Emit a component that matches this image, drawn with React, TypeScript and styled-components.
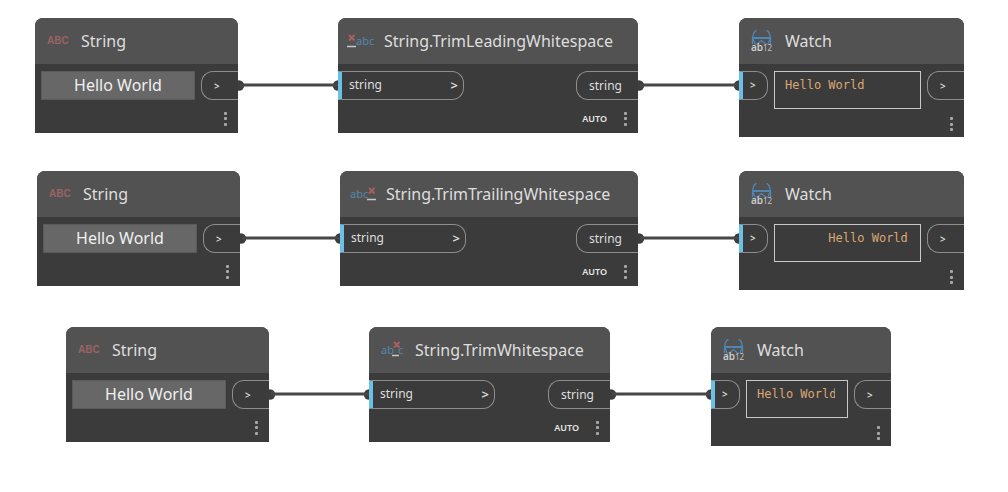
import React from "react";
import styled, { createGlobalStyle } from "styled-components";

const GlobalStyle = createGlobalStyle`
  * { box-sizing: border-box; }
  body {
    margin: 0;
    background: #ffffff;
    font-family: "Noto Sans", "Open Sans", sans-serif;
    color: #dedede;
  }
  button, input { font: inherit; color: inherit; }
`;

const Canvas = styled.main`
  display: flex;
  flex-direction: column;
  min-height: 100vh;
  padding-bottom: 32px;
  overflow-x: auto;
`;

const Graph = styled.section<{ $indent: number; $space: number }>`
  display: flex;
  align-items: flex-start;
  padding: ${(p) => p.$space}px 0 0 ${(p) => p.$indent}px;
`;

const NodeCard = styled.article<{ $width: number }>`
  position: relative;
  z-index: 1;
  flex: none;
  width: ${(p) => p.$width}px;
  border-radius: 8px 8px 0 0;
  background: #3b3b3b;
  overflow: hidden;
`;

const NodeHeader = styled.header`
  display: flex;
  align-items: center;
  gap: 9px;
  height: 46px;
  padding-left: 9px;
  background: #525252;
`;

const NodeTitle = styled.h2`
  margin: 0;
  font-size: 16px;
  line-height: 24px;
  font-weight: 400;
  white-space: nowrap;
`;

const NodeBody = styled.div<{ $flushLeft?: boolean }>`
  display: flex;
  align-items: flex-start;
  gap: 6px;
  padding: 7px 0 0 ${(p) => (p.$flushLeft ? 0 : 6)}px;
`;

const NodeFooter = styled.footer`
  display: flex;
  align-items: center;
  justify-content: flex-end;
  gap: 13px;
  height: 33px;
  padding: 4px 7px 0 0;
`;

const WatchFooter = styled(NodeFooter)`
  height: 28px;
  padding-top: 2px;
`;

const RunMode = styled.span`
  font-size: 9px;
  line-height: 14px;
  font-weight: 600;
  color: #e6e6e6;
`;

const MenuButton = styled.button`
  display: flex;
  flex-direction: column;
  align-items: center;
  justify-content: space-between;
  width: 11px;
  height: 14px;
  padding: 0;
  border: 0;
  background: none;
`;

const MenuDot = styled.i`
  width: 3px;
  height: 3px;
  border-radius: 1px;
  background: #a8a8a8;
`;

const Port = styled.button<{ $width: number }>`
  display: flex;
  flex: none;
  align-items: center;
  width: ${(p) => p.$width}px;
  height: 29px;
  border: 1px solid #8e8e8e;
  background: none;
  font-size: 12px;
  line-height: 16px;
`;

const InPort = styled(Port)`
  justify-content: space-between;
  padding: 0 5px 2px 7px;
  border-left: 4px solid #6ac0e7;
  border-radius: 0 12px 12px 0;
`;

const OutPort = styled(Port)`
  padding: 0 0 0 12px;
  margin-left: auto;
  border-right: 0;
  border-radius: 12px 0 0 12px;
`;

const Chevron = styled.span<{ $small?: boolean }>`
  font-size: ${(p) => (p.$small ? 10 : 13)}px;
  font-weight: 600;
`;

const StringField = styled.input`
  flex: 1;
  min-width: 0;
  height: 29px;
  padding: 0 0 2px;
  border: 1px solid #5a5a5a;
  background: #676767;
  font-size: 16px;
  text-align: center;
  color: #f0f0f0;
`;

const WatchValue = styled.output`
  flex: 1;
  min-width: 0;
  height: 38px;
  padding: 5px 12px 0 10px;
  border: 1px solid #c8c8c8;
`;

const WatchText = styled.span`
  display: block;
  overflow: hidden;
  font-family: "DejaVu Sans Mono", monospace;
  font-size: 12px;
  line-height: 16px;
  white-space: pre;
  color: #dba673;
`;

const WireLine = styled.svg`
  display: block;
  flex: none;
  height: 12px;
  margin-top: 61px;
  overflow: visible;
`;

const IconBox = styled.svg`
  flex: none;
  width: 28px;
  height: 28px;
`;

function Wire({ length }: { length: number }) {
  return (
    <WireLine width={length} viewBox={`0 0 ${length} 12`} aria-hidden="true">
      <circle cx={1} cy={6.5} r={5.2} fill="#3d3d3d" />
      <circle cx={length} cy={6.5} r={5.2} fill="#3d3d3d" />
      <path d={`M2 6H${length}`} stroke="#474747" strokeWidth={3} />
    </WireLine>
  );
}

const iconFont = "Noto Sans, sans-serif";

function StringIcon() {
  return (
    <IconBox viewBox="0 0 28 28" aria-hidden="true">
      <text x="3" y="17" fontFamily="Liberation Sans, sans-serif" fontSize="10" fontWeight="700" fill="#9a6462">ABC</text>
    </IconBox>
  );
}

function Cross({ x, y }: { x: number; y: number }) {
  return <path d={`M${x} ${y}l5.500 5.500m0-5.500l-5.500 5.500`} stroke="#a8605d" strokeWidth="2" />;
}

type TrimKind = "leading" | "trailing" | "both";

function TrimIcon({ kind }: { kind: TrimKind }) {
  const text = { fontFamily: iconFont, fontSize: 11, fill: "#5686ab" };
  return (
    <IconBox viewBox="0 0 28 28" aria-hidden="true">
      {kind === "leading" && (
        <>
          <Cross x={2} y={8} />
          <path d="M0 19.500h9" stroke="#c8c8c8" strokeWidth="1.500" />
          <text x="9" y="18" {...text}>abc</text>
        </>
      )}
      {kind === "trailing" && (
        <>
          <text x="1" y="18" {...text}>abc</text>
          <Cross x={20} y={8} />
          <path d="M18 19.500h9" stroke="#c8c8c8" strokeWidth="1.500" />
        </>
      )}
      {kind === "both" && (
        <>
          <text x="3" y="18" {...text}>ab</text>
          <text x="20" y="18" {...text}>c</text>
          <Cross x={16} y={6} />
          <path d="M14 19.500h7" stroke="#c8c8c8" strokeWidth="1.500" />
        </>
      )}
    </IconBox>
  );
}

function WatchIcon() {
  return (
    <IconBox viewBox="0 0 28 28" aria-hidden="true">
      <g fill="none" stroke="#4f86b5">
        <path d="M8.500 3.500Q5.500 4 4.500 11V17M18.500 3.500Q21.500 4 22.500 11V17" strokeWidth="1.300" />
        <path d="M4 11H23" strokeWidth="1.800" />
        <path d="M5 12L7 17H9.500L13.500 13.500L17.500 17H20L22 12" strokeWidth="1.200" />
      </g>
      <text x="3" y="24" fontFamily={iconFont} fontSize="10" fontWeight="600" fill="#cccccc">ab</text>
      <text x="15" y="24" fontFamily={iconFont} fontSize="8" fill="#c4c4c4">12</text>
    </IconBox>
  );
}

function Menu() {
  return (
    <MenuButton type="button" aria-label="Node options">
      <MenuDot />
      <MenuDot />
      <MenuDot />
    </MenuButton>
  );
}

function StringNode({ width }: { width: number }) {
  return (
    <NodeCard $width={width}>
      <NodeHeader>
        <StringIcon />
        <NodeTitle>String</NodeTitle>
      </NodeHeader>
      <NodeBody>
        <StringField aria-label="String value" defaultValue="Hello World" />
        <OutPort type="button" $width={37}>
          <Chevron $small>&gt;</Chevron>
        </OutPort>
      </NodeBody>
      <NodeFooter>
        <Menu />
      </NodeFooter>
    </NodeCard>
  );
}

function TrimNode({ width, title, kind }: { width: number; title: string; kind: TrimKind }) {
  return (
    <NodeCard $width={width}>
      <NodeHeader>
        <TrimIcon kind={kind} />
        <NodeTitle>{title}</NodeTitle>
      </NodeHeader>
      <NodeBody $flushLeft>
        <InPort type="button" $width={126}>
          <span>string</span>
          <Chevron>&gt;</Chevron>
        </InPort>
        <OutPort type="button" $width={62}>string</OutPort>
      </NodeBody>
      <NodeFooter>
        <RunMode>AUTO</RunMode>
        <Menu />
      </NodeFooter>
    </NodeCard>
  );
}

function WatchNode({ width, value }: { width: number; value: string }) {
  return (
    <NodeCard $width={width}>
      <NodeHeader>
        <WatchIcon />
        <NodeTitle>Watch</NodeTitle>
      </NodeHeader>
      <NodeBody $flushLeft>
        <InPort type="button" $width={29}>
          <Chevron $small>&gt;</Chevron>
        </InPort>
        <WatchValue>
          <WatchText>{value}</WatchText>
        </WatchValue>
        <OutPort type="button" $width={37}>
          <Chevron $small>&gt;</Chevron>
        </OutPort>
      </NodeBody>
      <WatchFooter>
        <Menu />
      </WatchFooter>
    </NodeCard>
  );
}

export default function App() {
  return (
    <>
      <GlobalStyle />
      <Canvas>
        <Graph $indent={35} $space={18}>
          <StringNode width={203} />
          <Wire length={100} />
          <TrimNode width={300} title="String.TrimLeadingWhitespace" kind="leading" />
          <Wire length={101} />
          <WatchNode width={225} value="Hello World" />
        </Graph>
        <Graph $indent={37} $space={34}>
          <StringNode width={203} />
          <Wire length={100} />
          <TrimNode width={298} title="String.TrimTrailingWhitespace" kind="trailing" />
          <Wire length={101} />
          <WatchNode width={225} value="      Hello World" />
        </Graph>
        <Graph $indent={66} $space={37}>
          <StringNode width={203} />
          <Wire length={100} />
          <TrimNode width={241} title="String.TrimWhitespace" kind="both" />
          <Wire length={101} />
          <WatchNode width={180} value="Hello World" />
        </Graph>
      </Canvas>
    </>
  );
}
